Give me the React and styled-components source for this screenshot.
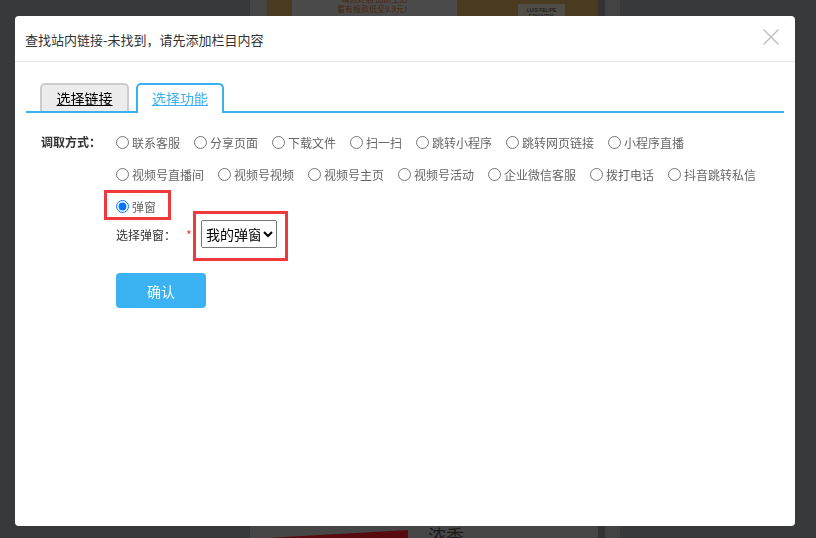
import React from "react";
import styled, { createGlobalStyle } from "styled-components";

const Global = createGlobalStyle`
  html, body { margin: 0; padding: 0; }
  body {
    font-family: "Noto Sans CJK SC", "Noto Sans", sans-serif;
    background: #a0a3a9;
    overflow: hidden;
  }
  * { box-sizing: border-box; }
`;

/* ---------- page behind the modal ---------- */
const Page = styled.div`
  height: 538px;
  display: flex;
  padding-left: 250px;
`;
const Column = styled.div`
  width: 348px;
  background: #c8c8c8;
  display: flex;
  flex-direction: column;
  justify-content: space-between;
`;
const ScrollTrack = styled.div`
  width: 7px;
  background: #929292;
`;
const SideStrip = styled.div`
  width: 15px;
  background: #c0c0c0;
`;
const Banner = styled.div`
  display: flex;
  height: 60px;
  padding-left: 17px;
`;
const BannerEdge = styled.div`
  width: 25px;
  background: #d3a65b;
`;
const BannerImg = styled.div`
  flex: 1;
  background: #d3a65b;
  padding: 4px 0 0 61px;
`;
const BannerMid = styled.div`
  width: 165px;
  background: #d8d8d8;
  display: flex;
  flex-direction: column;
  align-items: center;
  font-size: 8px;
  line-height: 10px;
  color: #d9702e;
  & > span:first-child {
    margin-top: -6px;
  }
`;
const WineLabel = styled.div`
  width: 47px;
  height: 40px;
  background: #e4d9c8;
  font-family: "Liberation Sans", sans-serif;
  font-size: 5px;
  line-height: 6px;
  text-align: center;
  color: #444;
  padding-top: 3px;
`;
const Product = styled.div`
  display: flex;
  align-items: flex-end;
  height: 14px;
  padding-left: 17px;
  overflow: hidden;
`;
const RedBox = styled.div`
  width: 141px;
  height: 8px;
  background: #ff1e2b;
  clip-path: polygon(0 100%, 100% 0, 100% 100%);
`;
const ProductText = styled.div`
  margin-left: 20px;
  font-size: 18px;
  line-height: 18px;
  color: #555;
  transform: translateY(6px);
`;

/* ---------- modal ---------- */
const Overlay = styled.div`
  position: fixed;
  inset: 0;
  background: rgba(0, 0, 0, 0.65);
  padding: 16px 0 0 15px;
`;
const Dialog = styled.div`
  width: 780px;
  height: 510px;
  background: #fff;
  border-radius: 4px;
  display: flex;
  flex-direction: column;
`;
const Header = styled.div`
  height: 46px;
  border-bottom: 1px solid #e5e5e5;
  display: flex;
  align-items: center;
  justify-content: space-between;
  padding: 1px 16px 0 10px;
`;
const Title = styled.div`
  font-size: 13px;
  color: #333;
`;
const Close = styled.button`
  width: 16px;
  height: 16px;
  padding: 0;
  border: none;
  background: none;
  margin-top: -5px;
  display: flex;
`;
const Body = styled.div`
  padding: 21px 11px 0;
`;
const TabBar = styled.div`
  display: flex;
  align-items: flex-end;
  gap: 7px;
  padding-left: 14px;
  border-bottom: 2px solid #3ab0ef;
`;
const Tab = styled.div`
  width: ${(p) => (p.$active ? 88 : 89)}px;
  height: ${(p) => (p.$active ? 30 : 28)}px;
  margin-bottom: ${(p) => (p.$active ? -2 : 0)}px;
  border: 2px solid ${(p) => (p.$active ? "#3ab0ef" : "#cccccc")};
  border-bottom: none;
  border-radius: 5px 5px 0 0;
  background: ${(p) => (p.$active ? "#fff" : "#ececec")};
  color: ${(p) => (p.$active ? "#3ab0ef" : "#000")};
  font-size: 14px;
  text-decoration: underline;
  display: flex;
  align-items: center;
  justify-content: center;
  padding-bottom: ${(p) => (p.$active ? 2 : 0)}px;
`;
const Form = styled.div`
  margin-top: 13px;
  padding-left: 15px;
  display: flex;
  flex-direction: column;
`;
const FormRow = styled.div`
  display: flex;
`;
const FieldLabel = styled.div`
  width: 75px;
  flex: none;
  line-height: 32px;
  font-size: 12px;
  font-weight: bold;
  color: #333;
`;
const Options = styled.div`
  width: 660px;
  display: flex;
  flex-wrap: wrap;
  column-gap: 14px;
`;
const Option = styled.label`
  display: inline-flex;
  align-items: center;
  gap: 3px;
  height: 32px;
  font-size: 12px;
  color: #666;
`;
const Radio = styled.input`
  margin: 0;
  width: 13px;
  height: 13px;
`;
const Highlight = styled.span`
  position: relative;
  display: inline-flex;
  &::after {
    content: "";
    position: absolute;
    top: ${(p) => p.$t}px;
    right: ${(p) => p.$r}px;
    bottom: ${(p) => p.$b}px;
    left: ${(p) => p.$l}px;
    border: 3px solid #f0393b;
    pointer-events: none;
  }
`;
const PopupRow = styled.div`
  margin-top: -2px;
  padding-left: 75px;
  display: flex;
  align-items: center;
  height: 28px;
`;
const PopLabel = styled.div`
  width: 60px;
  font-size: 12px;
  color: #333;
`;
const Required = styled.span`
  width: 15px;
  margin-left: 10px;
  font-size: 12px;
  color: #f33;
`;
const Select = styled.select`
  width: 76px;
  height: 28px;
  font-family: "Noto Sans CJK SC", sans-serif;
  font-size: 14px;
  color: #000;
`;
const Confirm = styled.button`
  margin: 25px 0 0 75px;
  width: 90px;
  height: 35px;
  border: none;
  border-radius: 4px;
  background: #3bb3f3;
  color: #fff;
  font-family: "Noto Sans CJK SC", sans-serif;
  font-size: 14px;
`;

const row1 = ["联系客服", "分享页面", "下载文件", "扫一扫", "跳转小程序", "跳转网页链接", "小程序直播"];
const row2 = ["视频号直播间", "视频号视频", "视频号主页", "视频号活动", "企业微信客服", "拨打电话", "抖音跳转私信"];

export default function App() {
  return (
    <>
      <Global />
      <Page>
        <Column>
          <Banner>
            <BannerEdge />
            <BannerMid>
              <span>精选好酒 品质生活</span>
              <span>看有服款低至9.9元！</span>
            </BannerMid>
            <BannerImg>
              <WineLabel>
                LUIS FELIPE
                <br />
                EDWARDS
              </WineLabel>
            </BannerImg>
          </Banner>
          <Product>
            <RedBox />
            <ProductText>浓香</ProductText>
          </Product>
        </Column>
        <ScrollTrack />
        <SideStrip />
      </Page>

      <Overlay>
        <Dialog>
          <Header>
            <Title>查找站内链接-未找到，请先添加栏目内容</Title>
            <Close aria-label="关闭">
              <svg width="16" height="16" viewBox="0 0 16 16">
                <path d="M0.5 0.5 L15.5 15.5 M15.5 0.5 L0.5 15.5" stroke="#bbb" strokeWidth="1.3" fill="none" />
              </svg>
            </Close>
          </Header>
          <Body>
            <TabBar>
              <Tab>选择链接</Tab>
              <Tab $active>选择功能</Tab>
            </TabBar>
            <Form>
              <FormRow>
                <FieldLabel>调取方式：</FieldLabel>
                <Options>
                  {[...row1, ...row2].map((t) => (
                    <Option key={t}>
                      <Radio type="radio" name="fn" />
                      {t}
                    </Option>
                  ))}
                  <Highlight $t={0} $r={-15} $b={2} $l={-12}>
                    <Option>
                      <Radio type="radio" name="fn" defaultChecked />
                      弹窗
                    </Option>
                  </Highlight>
                </Options>
              </FormRow>
              <PopupRow>
                <PopLabel>选择弹窗：</PopLabel>
                <Required>*</Required>
                <Highlight $t={-9} $r={-11} $b={-13} $l={-8}>
                  <Select defaultValue="1">
                    <option value="1">我的弹窗</option>
                  </Select>
                </Highlight>
              </PopupRow>
              <div>
                <Confirm>确认</Confirm>
              </div>
            </Form>
          </Body>
        </Dialog>
      </Overlay>
    </>
  );
}
